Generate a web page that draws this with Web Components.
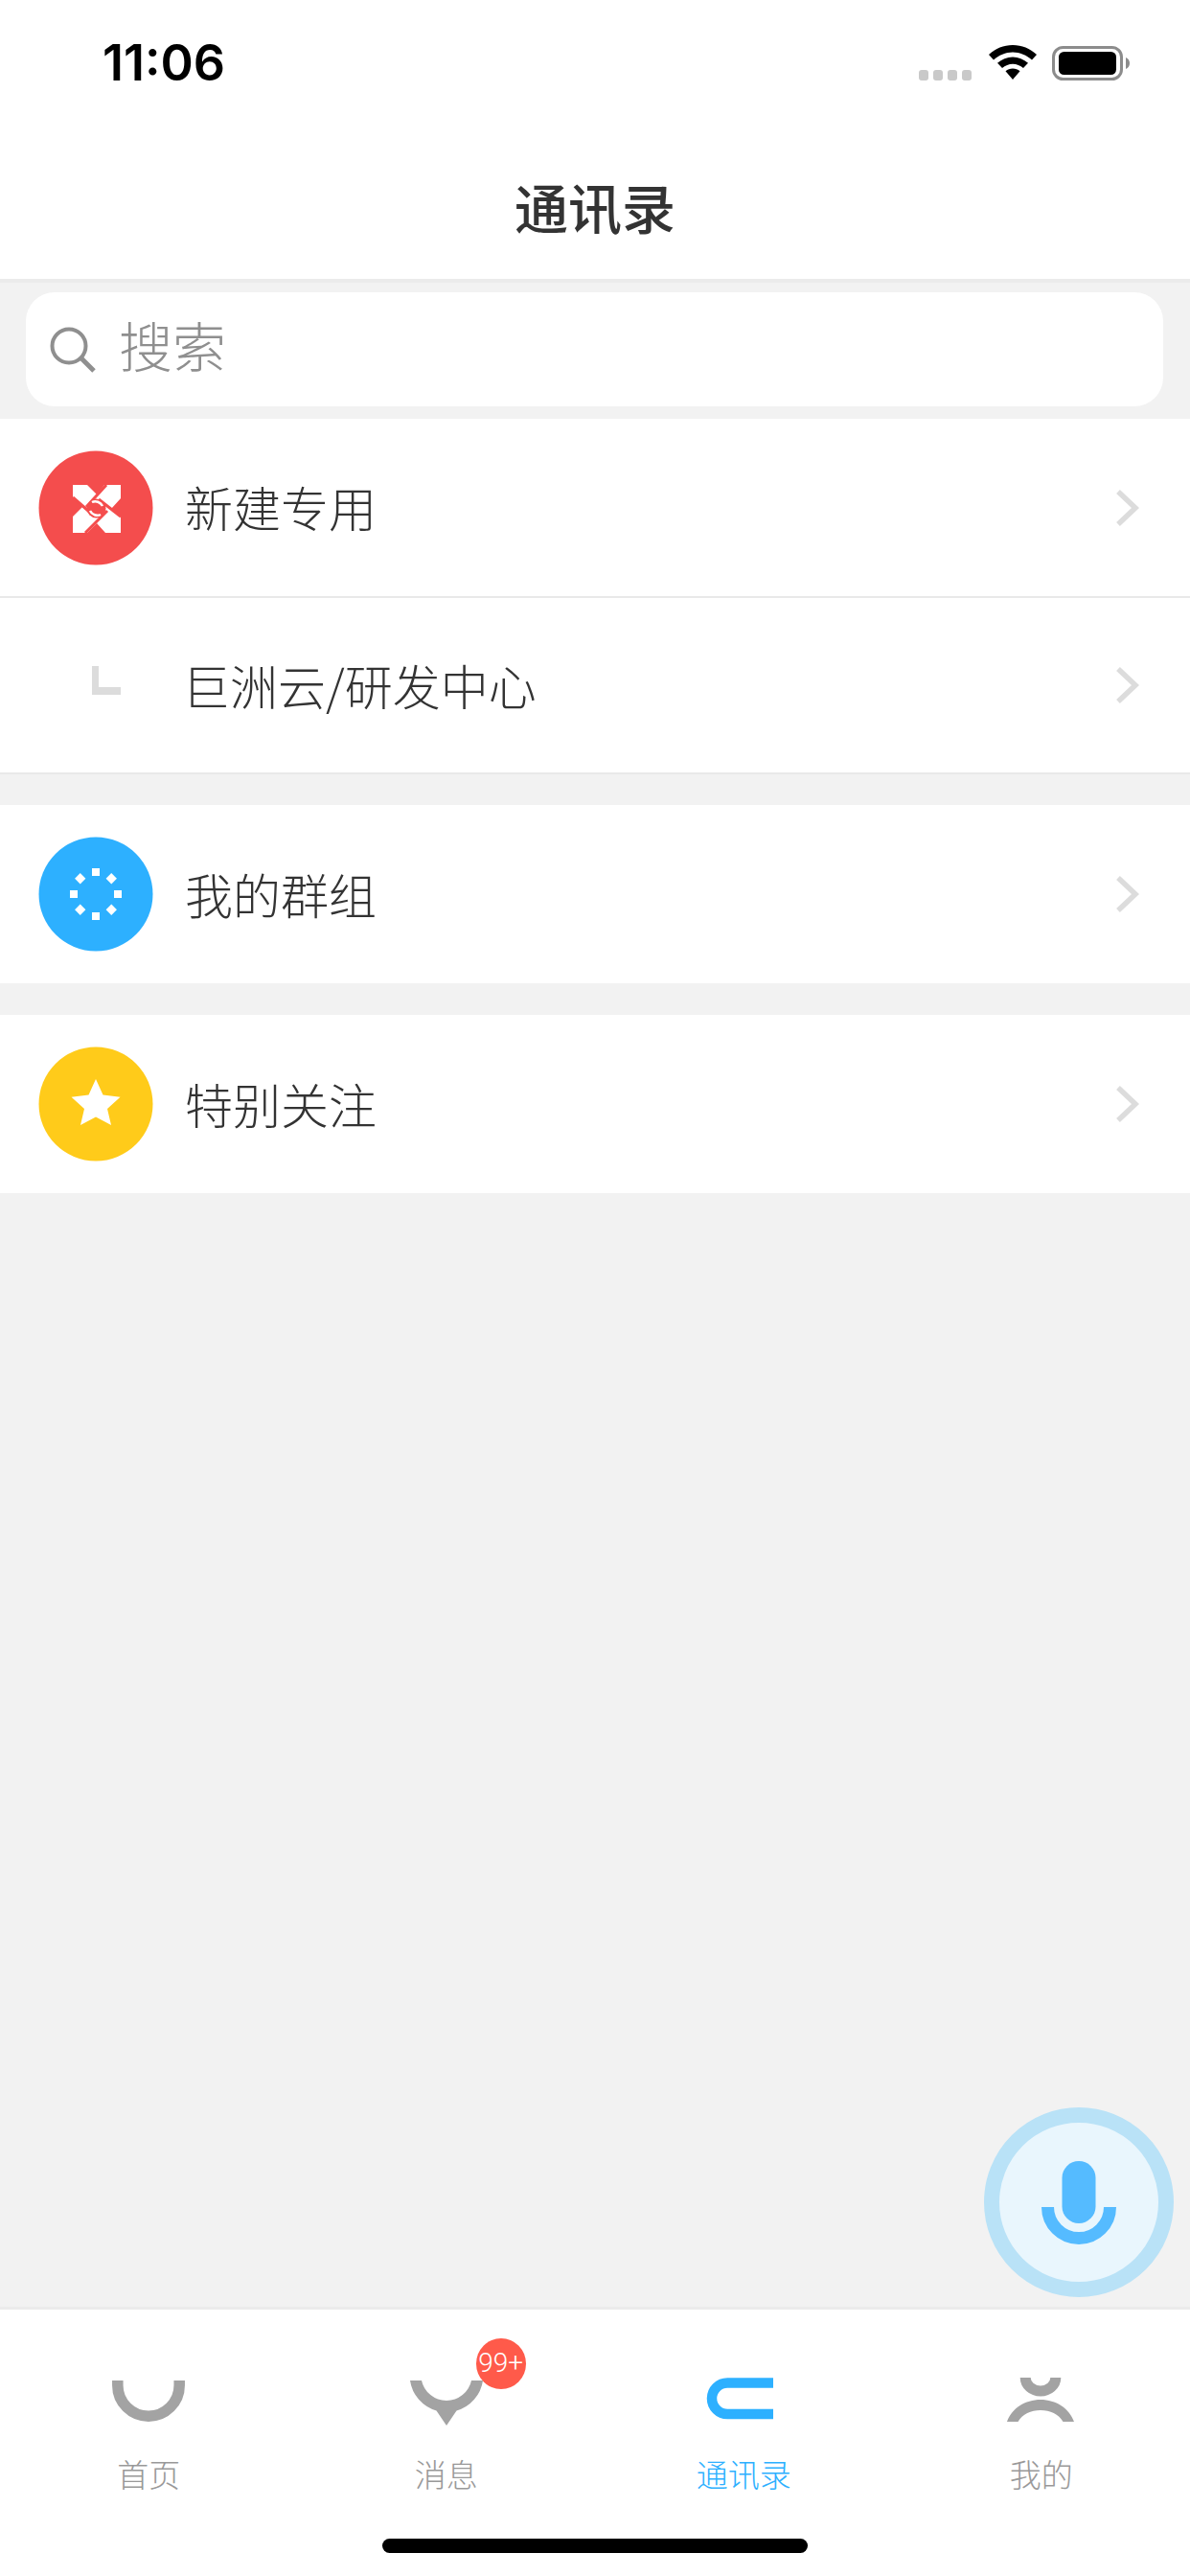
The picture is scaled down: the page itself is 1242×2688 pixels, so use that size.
<!DOCTYPE html>
<html lang="zh">
<head>
<meta charset="utf-8">
<title>通讯录</title>
<style>
  html, body { margin: 0; padding: 0; }
  body { font-family: "Noto Sans CJK SC", "Noto Sans", sans-serif; }
</style>
</head>
<body>
<app-shell>
  <status-bar slot="top" time="11:06"></status-bar>
  <nav-bar slot="top" title="通讯录"></nav-bar>

  <search-box placeholder="搜索"></search-box>

  <contact-group>
    <contact-row height="185" divider>
      <svg slot="icon" width="120" height="120" viewBox="0 0 120 120">
        <circle cx="60" cy="60" r="59.500" fill="#f44d4d"/>
        <path fill="#fff" d="M36 36H51L61 46L69 36H86V50L76 61L86 70V86H70L61 76L51 86H36V69L46 59L36 49Z"/>
        <g fill="none" stroke="#f44d4d" stroke-width="3">
          <path d="M36 49L59 69"/><path d="M86 69L63 51"/>
          <path d="M71 36L50 59"/><path d="M49 86L72 63"/>
        </g>
        <circle cx="60.500" cy="60.500" r="10" fill="#f44d4d"/>
        <path fill="none" stroke="#fff" stroke-width="2.500" d="M56 54C60 52 65 54 67 58M65 67C61 69 56 67 54 63"/>
      </svg>
      新建专用
    </contact-row>
    <contact-row height="182" divider>
      <svg slot="icon" width="120" height="120" viewBox="0 0 120 120">
        <path fill="#dcdcdc" d="M56 40H63V62H86V70H56Z"/>
      </svg>
      <span style="margin-left:-3px">巨洲云/研发中心</span>
    </contact-row>
  </contact-group>

  <contact-group style="margin-bottom:33px">
    <contact-row height="186">
      <svg slot="icon" width="120" height="120" viewBox="0 0 120 120">
        <circle cx="60" cy="60" r="59.500" fill="#2db0ff"/>
        <g fill="#fff">
          <rect x="56" y="33" width="8" height="8"/>
          <rect x="56" y="33" width="8" height="8" transform="rotate(45 60 60)"/>
          <rect x="56" y="33" width="8" height="8" transform="rotate(90 60 60)"/>
          <rect x="56" y="33" width="8" height="8" transform="rotate(135 60 60)"/>
          <rect x="56" y="33" width="8" height="8" transform="rotate(180 60 60)"/>
          <rect x="56" y="33" width="8" height="8" transform="rotate(225 60 60)"/>
          <rect x="56" y="33" width="8" height="8" transform="rotate(270 60 60)"/>
          <rect x="56" y="33" width="8" height="8" transform="rotate(315 60 60)"/>
        </g>
      </svg>
      我的群组
    </contact-row>
  </contact-group>

  <contact-group>
    <contact-row height="186">
      <svg slot="icon" width="120" height="120" viewBox="0 0 120 120">
        <circle cx="60" cy="60" r="59.500" fill="#ffcb1a"/>
        <path fill="#fff" d="M60 34L67.500 50.500L85.500 52.800L72 65L76 82L60 73.500L44 82L48 65L34.500 52.800L52.500 50.500Z"/>
      </svg>
      特别关注
    </contact-row>
  </contact-group>

  <mic-button></mic-button>

  <tab-bar slot="bottom">
    <tab-item label="首页">
      <svg width="90" height="60" viewBox="0 0 90 60">
        <path fill="none" stroke="#a3a3a3" stroke-width="11.500" d="M12.800 8V13A32.200 32.200 0 0 0 77.200 13V8"/>
      </svg>
    </tab-item>
    <tab-item label="消息" badge="99+">
      <svg width="90" height="60" viewBox="0 0 90 60">
        <path fill="#a3a3a3" d="M7 8H19A26.600 26.600 0 0 0 71 8H83A38.400 38.400 0 0 1 55.500 39.500L45 55L34.500 39.500A38.400 38.400 0 0 1 7 8Z"/>
      </svg>
    </tab-item>
    <tab-item label="通讯录" active>
      <svg width="90" height="60" viewBox="0 0 90 60">
        <path fill="none" stroke="#2db0ff" stroke-width="10.500" d="M76 10.500H28.250A16.250 16.250 0 0 0 28.250 43H76"/>
      </svg>
    </tab-item>
    <tab-item label="我的">
      <svg width="90" height="60" viewBox="0 0 90 60">
        <path fill="none" stroke="#a3a3a3" stroke-width="11" d="M28.200 5A15.800 14 0 0 0 59.800 5"/>
        <path fill="#a3a3a3" d="M9 51C14 37 28 28 44 28C60 28 74 37 79 51H67.500C63 43 54 39 44 39C34 39 25 43 20.500 51Z"/>
      </svg>
    </tab-item>
  </tab-bar>
</app-shell>

<script>
class AppShell extends HTMLElement {
  constructor() {
    super();
    this.attachShadow({ mode: 'open' });
  }

  getStyles() {
    return `
      <style>
        :host {
          display: flex;
          flex-direction: column;
          width: 1242px;
          height: 2688px;
          background: #f2f2f2;
          position: relative;
          overflow: hidden;
        }
        main {
          flex: 1;
          display: flex;
          flex-direction: column;
          position: relative;
        }
      </style>
    `;
  }

  connectedCallback() {
    this.shadowRoot.innerHTML = `
      ${this.getStyles()}
      <slot name="top"></slot>
      <main><slot></slot></main>
      <slot name="bottom"></slot>
    `;
  }
}

class StatusBar extends HTMLElement {
  constructor() {
    super();
    this.attachShadow({ mode: 'open' });
    this.time = this.getAttribute('time');
  }

  getStyles() {
    return `
      <style>
        :host {
          display: flex;
          align-items: flex-start;
          justify-content: space-between;
          height: 130px;
          box-sizing: border-box;
          padding: 36px 63px 0 107px;
          background: #fff;
        }
        .time {
          font: 600 52px/60px Inter, "Liberation Sans", sans-serif;
          color: #000;
        }
        .icons {
          display: flex;
          align-items: flex-end;
          height: 48px;
        }
        .dots { display: flex; gap: 5px; margin-right: 18px; }
        .dots i {
          width: 10px;
          height: 11px;
          border-radius: 3px;
          background: #c9c9c9;
        }
        svg { display: block; }
        .wifi { margin: 0 16px 1px 0; }
      </style>
    `;
  }

  connectedCallback() {
    this.shadowRoot.innerHTML = `
      ${this.getStyles()}
      <span class="time">${this.time}</span>
      <div class="icons">
        <div class="dots"><i></i><i></i><i></i><i></i></div>
        <svg class="wifi" width="50" height="36" viewBox="0 0 50 36">
          <path d="M25 0C34.500 0 43 3.600 50 10L45 15.500C39.500 10.500 32.500 7.500 25 7.500C17.500 7.500 10.500 10.500 5 15.500L0 10C7 3.600 15.500 0 25 0Z"/>
          <path d="M25 12.500C31 12.500 36.500 14.800 41 18.800L36 24C33 21.300 29 19.700 25 19.700C21 19.700 17 21.300 14 24L9 18.800C13.500 14.800 19 12.500 25 12.500Z"/>
          <path d="M25 24.500C27.800 24.500 30.400 25.500 32.500 27.300L25 36L17.500 27.300C19.600 25.500 22.200 24.500 25 24.500Z"/>
        </svg>
        <svg width="81" height="36" viewBox="0 0 81 36">
          <rect x="1.500" y="1.500" width="71" height="33" rx="10" fill="#fff" stroke="#8c8c8c" stroke-width="3"/>
          <rect x="7" y="6" width="60" height="24" rx="5.500" fill="#000"/>
          <path d="M77 12C79.500 13 81 15 81 18C81 21 79.500 23 77 24Z" fill="#8c8c8c"/>
        </svg>
      </div>
    `;
  }
}

class NavBar extends HTMLElement {
  constructor() {
    super();
    this.attachShadow({ mode: 'open' });
    this.title = this.getAttribute('title');
  }

  getStyles() {
    return `
      <style>
        :host {
          display: flex;
          align-items: center;
          justify-content: center;
          height: 161px;
          background: #fff;
          border-bottom: 4px solid #ebebeb;
        }
        h1 {
          margin: 8px 0 0;
          font: 500 56px/1 "Noto Sans CJK SC", "Noto Sans", sans-serif;
          color: #333;
        }
      </style>
    `;
  }

  connectedCallback() {
    this.shadowRoot.innerHTML = `
      ${this.getStyles()}
      <h1>${this.title}</h1>
    `;
  }
}

class SearchBox extends HTMLElement {
  constructor() {
    super();
    this.attachShadow({ mode: 'open' });
    this.placeholder = this.getAttribute('placeholder');
  }

  getStyles() {
    return `
      <style>
        :host {
          display: flex;
          align-items: center;
          box-sizing: border-box;
          height: 119px;
          margin: 10px 28px 13px 27px;
          padding: 0 0 0 24px;
          gap: 23px;
          border-radius: 30px;
          background: #fff;
        }
        svg { display: block; flex: none; }
        span {
          margin-bottom: 12px;
          font: 300 56px/1 "Noto Sans CJK SC", "Noto Sans", sans-serif;
          color: #8f8f8f;
        }
      </style>
    `;
  }

  connectedCallback() {
    this.shadowRoot.innerHTML = `
      ${this.getStyles()}
      <svg width="50" height="50" viewBox="0 0 50 50" fill="none" stroke="#8f8f8f" stroke-width="4">
        <circle cx="21" cy="21" r="17.500"/>
        <path d="M33.500 33.500L47 47" stroke-width="5"/>
      </svg>
      <span>${this.placeholder}</span>
    `;
  }
}

class ContactGroup extends HTMLElement {
  constructor() {
    super();
    this.attachShadow({ mode: 'open' });
  }

  connectedCallback() {
    this.shadowRoot.innerHTML = `
      <style>
        :host {
          display: block;
          margin-bottom: 32px;
          background: #fff;
        }
      </style>
      <slot></slot>
    `;
  }
}

class ContactRow extends HTMLElement {
  constructor() {
    super();
    this.attachShadow({ mode: 'open' });
    this.rowHeight = this.getAttribute('height');
  }

  getStyles() {
    return `
      <style>
        :host {
          display: flex;
          align-items: center;
          height: ${this.rowHeight}px;
          padding: 0 52px 0 40px;
          font: 300 50px/1 "Noto Sans CJK SC", "Noto Sans", sans-serif;
          color: #333;
          background: #fff;
        }
        :host([divider]) { border-bottom: 2px solid #e9e9e9; }
        .icon { display: block; flex: none; width: 120px; height: 120px; margin-right: 33px; }
        .label { flex: 1; margin-bottom: 3px; }
        .arrow { display: block; flex: none; }
      </style>
    `;
  }

  connectedCallback() {
    this.shadowRoot.innerHTML = `
      ${this.getStyles()}
      <div class="icon"><slot name="icon"></slot></div>
      <div class="label"><slot></slot></div>
      <svg class="arrow" width="26" height="40" viewBox="0 0 26 40" fill="none" stroke="#dcdcdc" stroke-width="5.500">
        <path d="M3 3L21 20L3 37"/>
      </svg>
    `;
  }
}

class MicButton extends HTMLElement {
  constructor() {
    super();
    this.attachShadow({ mode: 'open' });
  }

  connectedCallback() {
    // floats over the list, just above the tab bar
    this.shadowRoot.innerHTML = `
      <style>
        :host {
          display: flex;
          align-items: center;
          justify-content: center;
          position: absolute;
          right: 17px;
          bottom: 10px;
          width: 166px;
          height: 166px;
          border: 16px solid #b9e2f7;
          border-radius: 50%;
          background: #e9f6fd;
        }
        svg { display: block; }
      </style>
      <svg width="78" height="87" viewBox="0 0 78 87">
        <rect x="21.500" y="0" width="35" height="65" rx="17.500" fill="#55bbff"/>
        <path d="M6.500 48A32.500 32.500 0 0 0 71.500 48" fill="none" stroke="#55bbff" stroke-width="13"/>
      </svg>
    `;
  }
}

class TabBar extends HTMLElement {
  constructor() {
    super();
    this.attachShadow({ mode: 'open' });
  }

  connectedCallback() {
    this.shadowRoot.innerHTML = `
      <style>
        :host {
          display: block;
          height: 278px;
          border-top: 3px solid #ebebeb;
          background: #fff;
        }
        .tabs {
          display: grid;
          grid-template-columns: repeat(4, 1fr);
          padding-top: 66px;
        }
        .home {
          width: 444px;
          height: 15px;
          margin: 51px auto 0;
          border-radius: 8px;
          background: #000;
        }
      </style>
      <div class="tabs"><slot></slot></div>
      <div class="home"></div>
    `;
  }
}

class TabItem extends HTMLElement {
  constructor() {
    super();
    this.attachShadow({ mode: 'open' });
    this.label = this.getAttribute('label');
    this.badge = this.getAttribute('badge');
  }

  getStyles() {
    return `
      <style>
        :host {
          display: flex;
          flex-direction: column;
          align-items: center;
          gap: 29px;
          font: 300 33px/1 "Noto Sans CJK SC", "Noto Sans", sans-serif;
          color: #999;
        }
        :host([active]) { color: #2db0ff; }
        .pic { position: relative; height: 60px; width: 90px; }
        .badge {
          position: absolute;
          left: 76px;
          top: -36px;
          width: 52px;
          height: 53px;
          border-radius: 50%;
          background: #ff5a4a;
          color: #fff;
          font: 300 28px/52px Roboto, "Liberation Sans", sans-serif;
          text-align: center;
        }
      </style>
    `;
  }

  connectedCallback() {
    const badge = this.badge ? `<span class="badge">${this.badge}</span>` : '';
    this.shadowRoot.innerHTML = `
      ${this.getStyles()}
      <div class="pic"><slot></slot>${badge}</div>
      <span>${this.label}</span>
    `;
  }
}

customElements.define('app-shell', AppShell);
customElements.define('status-bar', StatusBar);
customElements.define('nav-bar', NavBar);
customElements.define('search-box', SearchBox);
customElements.define('contact-group', ContactGroup);
customElements.define('contact-row', ContactRow);
customElements.define('mic-button', MicButton);
customElements.define('tab-bar', TabBar);
customElements.define('tab-item', TabItem);
</script>
</body>
</html>
